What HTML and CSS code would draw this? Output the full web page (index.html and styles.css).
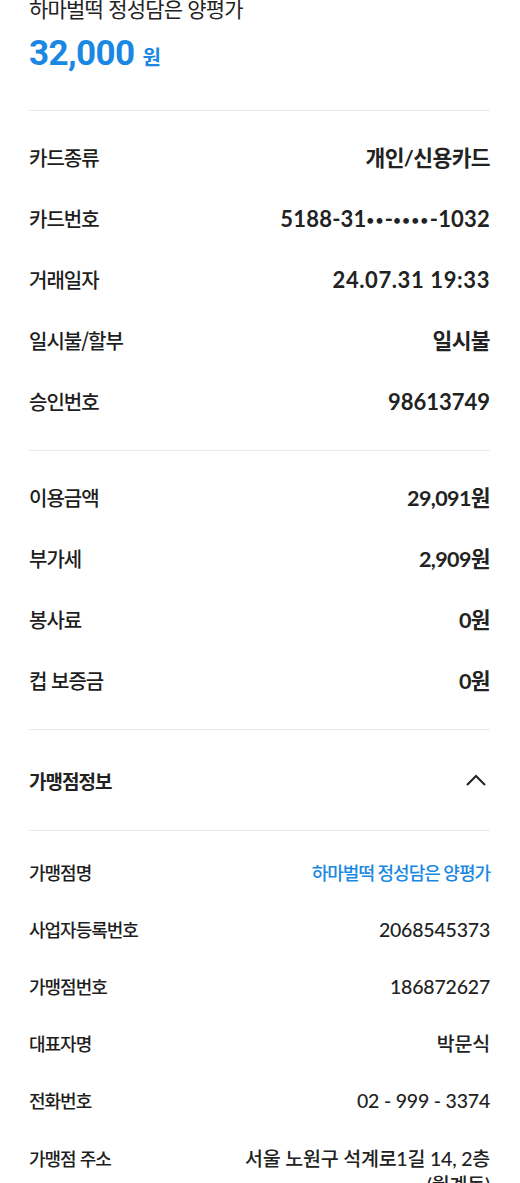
FILE: index.html
```html
<!DOCTYPE html>
<html lang="ko">
<head>
    <meta charset="UTF-8">
    <meta name="viewport" content="width=device-width, initial-scale=1.0">
    <title>카드 영수증</title>
    <link rel="stylesheet" href="styles.css">
</head>
<body>

    <div class="receipt">
        <div class="summary">
            <div class="store-title">하마벌떡 정성담은 양평가</div>
            <div class="amount"><span class="amount-num">32,000</span><span class="amount-unit">원</span></div>
        </div>

        <div class="section">
            <div class="row"><span class="label">카드종류</span><span class="value">개인/신용카드</span></div>
            <div class="row"><span class="label">카드번호</span><span class="value card-no">5188-31<span class="mask">••</span>-<span class="mask">••••</span>-1032</span></div>
            <div class="row"><span class="label">거래일자</span><span class="value date">24.07.31 19:33</span></div>
            <div class="row"><span class="label">일시불/할부</span><span class="value">일시불</span></div>
            <div class="row"><span class="label">승인번호</span><span class="value num">98613749</span></div>
        </div>

        <div class="section">
            <div class="row"><span class="label">이용금액</span><span class="value">29,091원</span></div>
            <div class="row"><span class="label">부가세</span><span class="value">2,909원</span></div>
            <div class="row"><span class="label">봉사료</span><span class="value">0원</span></div>
            <div class="row"><span class="label">컵 보증금</span><span class="value">0원</span></div>
        </div>

        <div class="toggle">
            <span class="toggle-title">가맹점정보</span>
            <svg class="chevron" width="22" height="14" viewBox="0 0 22 14">
                <path d="M2 12 L11 3 L20 12" fill="none" stroke="#222" stroke-width="2"/>
            </svg>
        </div>

        <div class="section store">
            <div class="row"><span class="label">가맹점명</span><span class="value link">하마벌떡 정성담은 양평가</span></div>
            <div class="row"><span class="label">사업자등록번호</span><span class="value">2068545373</span></div>
            <div class="row"><span class="label">가맹점번호</span><span class="value">186872627</span></div>
            <div class="row"><span class="label">대표자명</span><span class="value">박문식</span></div>
            <div class="row"><span class="label">전화번호</span><span class="value">02 - 999 - 3374</span></div>
            <div class="row address"><span class="label">가맹점 주소</span><span class="value">서울 노원구 석계로1길 14, 2층 (월계동)</span></div>
        </div>
    </div>

</body>
</html>
```

FILE: styles.css
```css
body {
    margin: 0;
    background: #fff;
    font-family: "Noto Sans CJK KR", sans-serif;
    color: #222;
}
.receipt {
    padding: 0 30px 0 29px;
}
.summary {
    margin-top: -5px;
    padding-bottom: 32px;
    border-bottom: 1px solid #e9e9e9;
}
.store-title {
    font-size: 21px;
    line-height: 26px;
    letter-spacing: -0.8px;
    color: #222;
}
.amount {
    margin-top: 13px;
    line-height: 40px;
    color: #1a88e3;
}
.amount-num {
    font-family: Roboto, "Noto Sans", sans-serif;
    font-size: 35px;
    font-weight: 700;
    letter-spacing: -0.6px;
}
.amount-unit {
    margin-left: 8px;
    font-size: 20px;
    font-weight: 700;
}
.section {
    padding: 17px 0;
    border-bottom: 1px solid #e9e9e9;
}
.row {
    display: flex;
    justify-content: space-between;
    align-items: baseline;
    height: 61px;
    line-height: 59px;
}
.label {
    font-size: 20px;
    letter-spacing: -1px;
    font-weight: 500;
    color: #1e1e1e;
}
.value {
    font-family: Lato, "Noto Sans CJK KR", sans-serif;
    font-size: 21.5px;
    font-weight: 700;
    letter-spacing: -0.6px;
    color: #222;
    text-align: right;
}
.num {
    font-size: 22px;
    letter-spacing: 0;
}
.date {
    font-size: 22px;
    letter-spacing: 0.6px;
    word-spacing: 0;
}
.card-no {
    font-size: 22px;
    letter-spacing: 0.2px;
}
.mask {
    font-size: 13px;
    letter-spacing: 1.6px;
    vertical-align: 2px;
}
.toggle {
    display: flex;
    justify-content: space-between;
    align-items: center;
    height: 100px;
    border-bottom: 1px solid #e9e9e9;
}
.toggle-title {
    font-size: 19px;
    font-weight: 700;
    letter-spacing: -1px;
}
.chevron {
    margin-right: 3px;
}
.store {
    padding: 14px 0 0;
    border-bottom: none;
}
.store .row {
    height: 57px;
    line-height: 55px;
}
.store .label {
    font-size: 18px;
    letter-spacing: -1px;
}
.store .value {
    font-size: 19.5px;
    font-weight: 500;
    letter-spacing: -0.2px;
}
.store .link {
    font-size: 18px;
    letter-spacing: -1px;
    color: #1a88e3;
}
.store .address {
    height: auto;
}
.address .value {
    max-width: 245px;
    line-height: 26px;
    padding-top: 15px;
}
.address .label {
    line-height: 26px;
    padding-top: 15px;
}
```
